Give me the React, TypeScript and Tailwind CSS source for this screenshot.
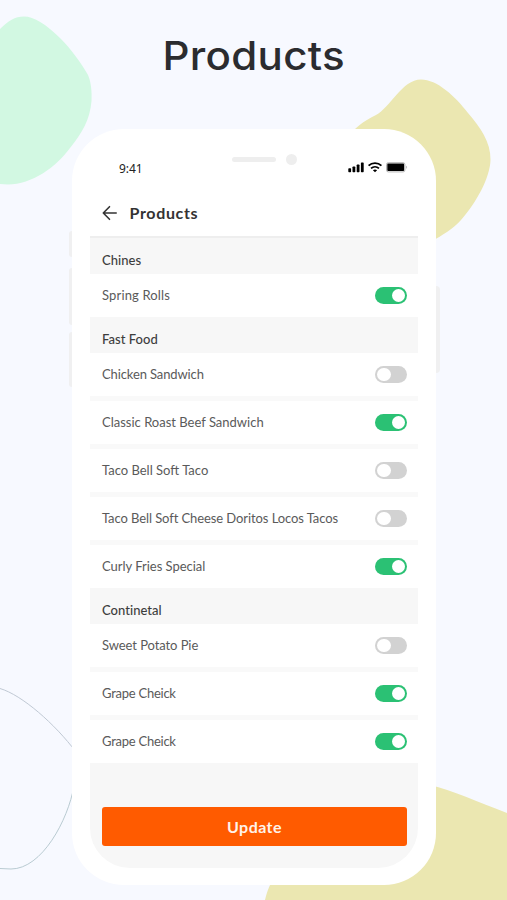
import { useState } from 'react'

type Product = {
  id: number
  name: string
  active: boolean
  tracking: string
}

type Category = {
  title: string
  products: Product[]
}

const CATEGORIES: Category[] = [
  {
    title: 'Chines',
    products: [{ id: 1, name: 'Spring Rolls', active: true, tracking: 'tracking-[0.15px]' }],
  },
  {
    title: 'Fast Food',
    products: [
      { id: 2, name: 'Chicken Sandwich', active: false, tracking: 'tracking-[-0.12px]' },
      { id: 3, name: 'Classic Roast Beef Sandwich', active: true, tracking: 'tracking-[0px]' },
      { id: 4, name: 'Taco Bell Soft Taco', active: false, tracking: 'tracking-[0px]' },
      { id: 5, name: 'Taco Bell Soft Cheese Doritos Locos Tacos', active: false, tracking: 'tracking-[-0.09px]' },
      { id: 6, name: 'Curly Fries Special', active: true, tracking: 'tracking-[-0.02px]' },
    ],
  },
  {
    title: 'Continetal',
    products: [
      { id: 7, name: 'Sweet Potato Pie', active: false, tracking: 'tracking-[-0.08px]' },
      { id: 8, name: 'Grape Cheick', active: true, tracking: 'tracking-[-0.25px]' },
      { id: 9, name: 'Grape Cheick', active: true, tracking: 'tracking-[-0.25px]' },
    ],
  },
]

const Background = () => (
  <svg className="absolute inset-0" width="507" height="900" viewBox="0 0 507 900" fill="none">
    <path
      d="M0 29C8 21 15 16.500 24 16.500C34 16.500 46 24 61 39C71 49 82 64 88 75C91 82 92 91 91.500 101C90 120 82 133 70 148C56 167 32 184.500 8 184.500L0 184Z"
      fill="#d2f8e2"
    />
    <path
      d="M345 142C354 127 364 121 376 115C390 108 402 79.500 421 79.500C437 79.500 455 96 468 113C480 127 491 142 490.500 160C490 178 476 203 461 220C453 229 443 235 430 242L345 200Z"
      fill="#ebe7b1"
    />
    <path d="M265 900C268 888 272 878 282 868L430 785C452 790 478 802 507 813V900Z" fill="#ebe7b1" />
    <path d="M0 688.500C22 695 55 724 76 752" stroke="#c0c9d4" strokeWidth="1" />
    <path d="M74 786C68 820 42 869 11 869L0 868.500" stroke="#b9cbd2" strokeWidth="1" />
  </svg>
)

const StatusIcons = () => (
  <svg width="60" height="12" viewBox="0 0 60 12" fill="none">
    <g fill="#000">
      <rect x="0.300" y="7.300" width="2.800" height="3.900" rx="0.700" />
      <rect x="4.500" y="5.600" width="2.800" height="5.600" rx="0.700" />
      <rect x="8.700" y="3.600" width="2.800" height="7.600" rx="0.700" />
      <rect x="12.900" y="1.400" width="2.800" height="9.800" rx="0.700" />
    </g>
    <path d="M20.600 4.700C24.100 1.300 29.900 1.300 33.400 4.700" stroke="#000" strokeWidth="1.800" />
    <path d="M23 7.300C25.300 5.300 28.700 5.300 31 7.300" stroke="#000" strokeWidth="1.700" />
    <path d="M27 11.200L24.900 9.200C26.100 8.200 27.900 8.200 29.100 9.200Z" fill="#000" />
    <rect x="38.500" y="1.700" width="18.400" height="9.200" rx="1.800" stroke="#b5b5b5" />
    <rect x="39.300" y="2.600" width="16.800" height="7.400" rx="0.800" fill="#000" />
    <path d="M58.200 4.800C59.400 5.300 59.400 7.300 58.200 7.800Z" fill="#b5b5b5" />
  </svg>
)

const Toggle = ({ checked, onChange }: { checked: boolean; onChange: () => void }) => (
  <button
    type="button"
    role="switch"
    aria-checked={checked}
    onClick={onChange}
    className={`flex h-[17px] w-8 items-center rounded-full px-[2px] ${
      checked ? 'justify-end bg-[#2bc174]' : 'justify-start bg-[#d2d2d2]'
    }`}
  >
    <span className="size-[13.5px] rounded-full bg-white" />
  </button>
)

export default function App() {
  const [categories, setCategories] = useState(CATEGORIES)

  const toggleProduct = (id: number) => {
    setCategories((prev) =>
      prev.map((category) => ({
        ...category,
        products: category.products.map((p) => (p.id === id ? { ...p, active: !p.active } : p)),
      }))
    )
  }

  return (
    <div className="relative h-[900px] w-[507px] overflow-hidden bg-[#f7f9ff] font-['Lato',sans-serif]">
      <Background />

      <div className="relative flex flex-col items-center">
        <h1 className="h-[129px] scale-x-[1.065] pt-[28px] font-['Inter',sans-serif] text-[39.5px] leading-[56px] font-medium tracking-[0.3px] text-[#2b2c2f]">
          Products
        </h1>

        <div className="flex pl-px">
          <div className="flex w-[3.5px] flex-col pt-[102px]">
            <span className="h-[26px] rounded-l-sm bg-[#f0f0f1]" />
            <span className="mt-[11px] h-[57px] rounded-l-sm bg-[#f0f0f1]" />
            <span className="mt-[7px] h-[55px] rounded-l-sm bg-[#f0f0f1]" />
          </div>

          <div className="flex h-[756px] w-[364px] flex-col rounded-[52px] bg-white px-[18px] pb-[17px]">
            <div className="relative flex h-[60px] shrink-0 items-start justify-between pr-[10px] pl-[29px]">
              <span className="pt-[30px] font-['Noto_Sans',sans-serif] text-[12px] leading-5 tracking-[-0.1px] text-[#222]">9:41</span>
              <div className="absolute top-[25px] left-[142px] flex items-center gap-[10px]">
                <span className="h-[5px] w-[44px] rounded-full bg-[#eeeeee]" />
                <span className="size-[10.5px] rounded-full bg-[#eeeeee]" />
              </div>
              <div className="pt-[32px]">
                <StatusIcons />
              </div>
            </div>

            <header className="flex h-[49px] shrink-0 items-center gap-3 border-b-2 border-[#eeeeee] pl-[11.5px]">
              <svg width="16" height="16" viewBox="0 0 16 16" fill="none" stroke="#333" strokeWidth="1.600">
                <path d="M14.200 8H1.300M7.500 1.700L1.300 8L7.500 14.300" strokeLinecap="round" strokeLinejoin="round" />
              </svg>
              <h2 className="text-base font-bold tracking-[0.65px] text-[#333]">Products</h2>
            </header>

            <main className="flex grow flex-col rounded-b-[40px] bg-[#f7f7f7]">
              {categories.map((category) => (
                <section key={category.title}>
                  <h3 className="flex h-9 items-center pt-2 pl-3 text-[13px] leading-4 font-medium tracking-[0.03px] text-[#3d3d3d]">
                    {category.title}
                  </h3>
                  <ul className="flex flex-col gap-[5px] bg-[#f9f9f9]">
                    {category.products.map((product) => (
                      <li key={product.id} className="flex h-[43px] items-center justify-between bg-white pr-[11px] pl-3">
                        <span className={`text-[13px] text-[#5a5a5a] ${product.tracking}`}>{product.name}</span>
                        <Toggle checked={product.active} onChange={() => toggleProduct(product.id)} />
                      </li>
                    ))}
                  </ul>
                </section>
              ))}

              <div className="pt-[44px] pr-[11px] pl-3">
                <button
                  type="button"
                  className="h-[39px] w-full rounded-[3px] bg-[#ff5b00] text-base font-bold tracking-[0.45px] text-[#fff3ea]"
                >
                  Update
                </button>
              </div>
            </main>
          </div>

          <div className="w-[3.5px] pt-[157px]">
            <div className="h-[87px] rounded-r-sm bg-[#f0f0f1]" />
          </div>
        </div>
      </div>
    </div>
  )
}
